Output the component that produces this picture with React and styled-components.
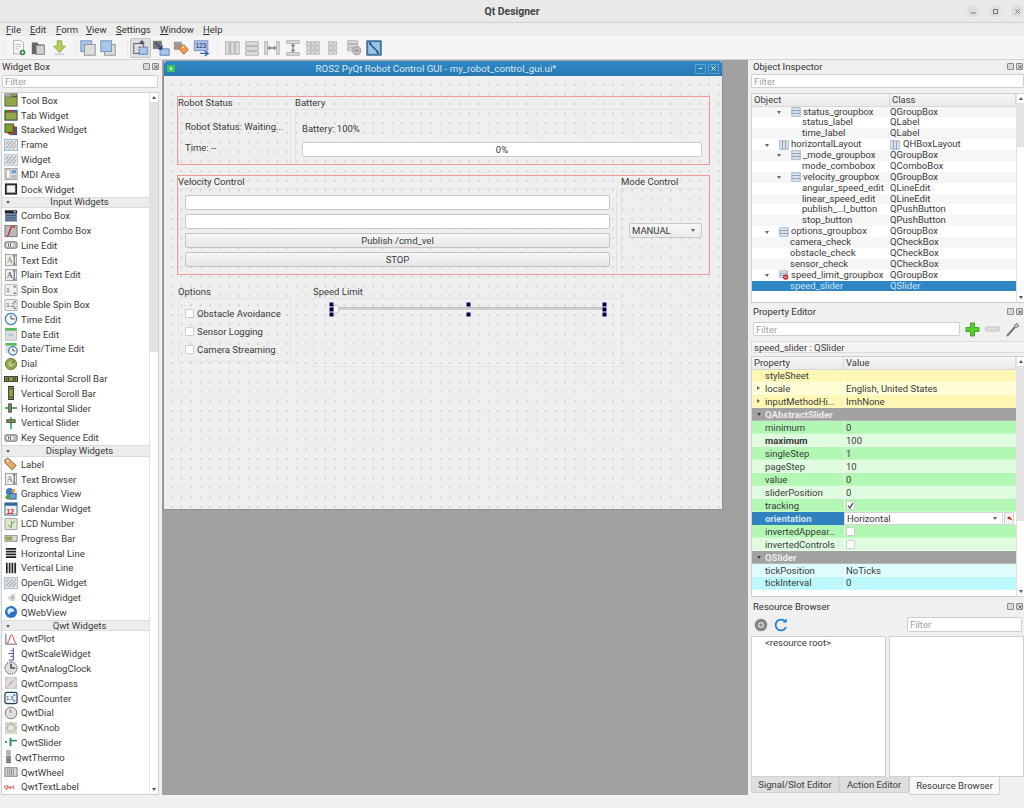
import React from "react";
import styled, { createGlobalStyle } from "styled-components";

const FONT = `Roboto, "Open Sans", "Liberation Sans", sans-serif`;
const TEXT_SIZE = "9.5px";

const GlobalStyle = createGlobalStyle`
  html, body {
    margin: 0;
    padding: 0;
    background: #f0f0f0;
  }
  * { box-sizing: border-box; }
`;

const Screen = styled.div`
  width: 1024px;
  height: 808px;
  display: flex;
  flex-direction: column;
  overflow: hidden;
  background: #f0f0f0;
  color: #3a3a3a;
  font-family: ${FONT};
  font-size: ${TEXT_SIZE};
`;

const TitleBar = styled.div`
  height: 23px;
  flex: none;
  display: flex;
  align-items: center;
  justify-content: flex-end;
  gap: 10px;
  padding-right: 1px;
  position: relative;
  background: #e9e9e9;
  border-bottom: 1px solid #cfcfcf;
`;

const AppTitle = styled.div`
  position: absolute;
  left: 0;
  right: 0;
  text-align: center;
  font-weight: 700;
  font-size: 10.4px;
  color: #444;
`;

const WinButton = styled.div`
  width: 12px;
  height: 12px;
  border-radius: 50%;
  background: #dedede;
  display: flex;
  align-items: center;
  justify-content: center;
`;

const MenuBar = styled.div`
  height: 13px;
  flex: none;
  display: flex;
  align-items: center;
  padding-left: 6px;
  background: #ececec;
`;

const MenuItem = styled.div`
  width: ${p => p.$w}px;
  color: #333;
`;

const ToolBar = styled.div`
  height: 24px;
  flex: none;
  display: flex;
  align-items: center;
  padding-left: 3px;
  background: #f5f5f5;
  border-bottom: 1px solid #d2d2d2;
`;

const Grip = styled.div`
  width: 3px;
  height: 12px;
  margin: 0 ${p => p.$after || 6}px 0 ${p => p.$before || 0}px;
  background-image: radial-gradient(circle, #c4c4c4 0.7px, transparent 0.9px);
  background-size: 3px 3px;
`;

const ToolBtn = styled.div`
  width: 20.3px;
  height: 20px;
  flex: none;
  display: flex;
  align-items: center;
  justify-content: center;
  border-radius: 2px;
  background: ${p => (p.$on ? "#dedede" : "transparent")};
  border: 1px solid ${p => (p.$on ? "#c6c6c6" : "transparent")};
`;

const Main = styled.div`
  flex: 1;
  min-height: 0;
  display: flex;
  padding-bottom: 13px;
`;

const Dock = styled.div`
  width: 160px;
  flex: none;
  display: flex;
  flex-direction: column;
`;

const DockHead = styled.div`
  height: 13px;
  flex: none;
  display: flex;
  align-items: center;
  justify-content: space-between;
  padding: 0 1px 0 2px;
  color: #333;
  white-space: nowrap;
`;

const DockBtns = styled.div`
  display: flex;
  gap: 2px;
`;

const DockBtn = styled.div`
  width: 7px;
  height: 7px;
  border: 1px solid #8a8a8a;
  border-radius: 1px;
  background: #d8d8d8;
  display: flex;
  align-items: center;
  justify-content: center;
`;

const FilterInput = styled.input`
  display: block;
  width: ${p => (p.$w ? `${p.$w}px` : "auto")};
  height: ${p => p.$h || 14}px;
  margin: ${p => p.$m || "0"};
  padding: 0 2px;
  border: 1px solid #cfcfcf;
  border-radius: 2px;
  background: #fff;
  font-family: ${FONT};
  font-size: ${TEXT_SIZE};
  outline: none;
  &::placeholder { color: #a0a0a0; opacity: 1; }
`;

const BoxList = styled.div`
  flex: 1;
  min-height: 0;
  margin: 4px 1px 0 1px;
  display: flex;
  background: #fff;
  border: 1px solid #d0d0d0;
  overflow: hidden;
`;

const ListCol = styled.div`
  flex: 1;
  min-width: 0;
`;

const Row = styled.div`
  height: 14.8px;
  display: flex;
  align-items: center;
  padding-left: ${p => (p.$narrow ? 3 : 2)}px;
  gap: 3px;
  color: #3a3a3a;
  white-space: nowrap;
`;

const Category = styled.div`
  height: 11.8px;
  position: relative;
  display: flex;
  align-items: center;
  justify-content: center;
  padding-left: 8px;
  background: #ececec;
  border-top: 1px solid #dcdcdc;
  border-bottom: 1px solid #dcdcdc;
  color: #3a3a3a;
  line-height: 10px;
`;

const SmallArrow = styled.span`
  position: absolute;
  left: ${p => p.$left ?? 4}px;
  top: 50%;
  margin-top: -1px;
  border-left: 2px solid transparent;
  border-right: 2px solid transparent;
  border-top: 3px solid ${p => p.$color || "#666"};
`;

const Scroll = styled.div`
  width: ${p => p.$w || 9}px;
  flex: none;
  display: flex;
  flex-direction: column;
  background: #fff;
  border-left: 1px solid #e2e2e2;
`;

const ScrollEnd = styled.div`
  height: 9px;
  flex: none;
  display: flex;
  align-items: center;
  justify-content: center;
`;

const Thumb = styled.div`
  height: ${p => p.$h}px;
  flex: none;
  background: #e3e3e3;
`;

const ScrollRest = styled.div`
  flex: 1;
  display: flex;
  flex-direction: column;
  justify-content: flex-end;
`;

const ArrowUp = styled.span`
  border-left: 2.5px solid transparent;
  border-right: 2.5px solid transparent;
  border-bottom: 3px solid #555;
`;

const ArrowDown = styled.span`
  border-left: 2.5px solid transparent;
  border-right: 2.5px solid transparent;
  border-top: 3px solid #555;
`;

const Mdi = styled.div`
  width: 586px;
  flex: none;
  margin: 0 2px;
  padding: 1px 0 0 1px;
  background: #a1a1a1;
`;

const FormWindow = styled.div`
  width: 560px;
  height: 449px;
  display: flex;
  flex-direction: column;
  border-left: 1px solid #8f8f8f;
  border-right: 1px solid #8f8f8f;
  border-bottom: 1px solid #8f8f8f;
  background: #efefef;
`;

const FormTitle = styled.div`
  height: 15px;
  flex: none;
  display: flex;
  align-items: center;
  padding: 0 3px;
  position: relative;
  background: linear-gradient(#3089c7, #2878b2);
  border-radius: 3px 3px 0 0;
  color: #d8e8f4;
  font-size: 9.7px;
`;

const FormTitleText = styled.div`
  position: absolute;
  left: 0;
  right: 14px;
  text-align: center;
`;

const FormBtns = styled.div`
  margin-left: auto;
  display: flex;
  gap: 2px;
  z-index: 1;
`;

const FormBtn = styled.div`
  width: 11px;
  height: 10px;
  border: 1px solid #5fa3d3;
  border-radius: 1px;
  display: flex;
  align-items: center;
  justify-content: center;
  color: #fff;
`;

const Canvas = styled.div`
  flex: 1;
  display: flex;
  flex-direction: column;
  padding: 20px 13px 0 13px;
  gap: 10px;
  background-color: #efefef;
  background-image: radial-gradient(circle, #b4b4b4 0.55px, transparent 0.8px);
  background-size: 9.6px 9.6px;
  background-position: 3px 4px;
`;

const RedLayout = styled.div`
  height: ${p => p.$h}px;
  width: 533px;
  flex: none;
  display: flex;
  gap: 4px;
  padding: 0 1px;
  position: relative;
  &::after {
    content: "";
    position: absolute;
    inset: 0;
    z-index: 2;
    border: 1px solid #f29a9a;
    pointer-events: none;
  }
`;

const PlainLayout = styled.div`
  display: flex;
  align-items: flex-start;
  gap: 22px;
  padding-left: 1px;
`;

const Group = styled.div`
  width: ${p => (p.$w ? `${p.$w}px` : "auto")};
  flex: ${p => (p.$w ? "none" : "1")};
  height: ${p => (p.$h ? `${p.$h}px` : "auto")};
  display: flex;
  flex-direction: column;
  white-space: nowrap;
`;

const GroupLabel = styled.div`
  height: 13px;
  padding-bottom: 1px;
  flex: none;
  display: flex;
  align-items: center;
  color: #3a3a3a;
`;

const GroupFrame = styled.div`
  flex: 1;
  min-height: 0;
  display: flex;
  flex-direction: column;
  gap: ${p => p.$gap ?? 4}px;
  padding: ${p => p.$pad || "7px"};
  justify-content: ${p => p.$justify || "flex-start"};
  position: relative;
  border: 1px solid #e2e2e2;
`;

const FieldLabel = styled.div`
  height: 14px;
  flex: none;
  display: flex;
  align-items: center;
  color: #3a3a3a;
  white-space: nowrap;
`;

const Progress = styled.div`
  height: 15px;
  flex: none;
  display: flex;
  align-items: center;
  justify-content: center;
  background: #fff;
  border: 1px solid #cdcdcd;
  border-radius: 2px;
`;

const FormInput = styled.input`
  display: block;
  width: 100%;
  height: 15px;
  flex: none;
  border: 1px solid #c6c6c6;
  border-radius: 2px;
  background: #fff;
  outline: none;
`;

const PushButton = styled.button`
  display: block;
  width: 100%;
  height: 15px;
  flex: none;
  padding: 0;
  border: 1px solid #c4c4c4;
  border-radius: 2px;
  background: linear-gradient(#f6f6f6, #e6e6e6);
  font-family: ${FONT};
  font-size: ${TEXT_SIZE};
  color: #3a3a3a;
`;

const Combo = styled.div`
  height: 15px;
  flex: none;
  display: flex;
  align-items: center;
  justify-content: space-between;
  padding: 0 6px 0 2px;
  background: linear-gradient(#f6f6f6, #ebebeb);
  border: 1px solid #c8c8c8;
  border-radius: 2px;
  position: relative;
  color: #3a3a3a;
`;

const InlineArrow = styled.span`
  border-left: 2.5px solid transparent;
  border-right: 2.5px solid transparent;
  border-top: 3px solid #666;
`;

const CheckRow = styled.div`
  height: 18px;
  flex: none;
  display: flex;
  align-items: center;
  gap: 3px;
  color: #3a3a3a;
  white-space: nowrap;
`;

const CheckBox = styled.span`
  width: 9px;
  height: 9px;
  flex: none;
  display: flex;
  align-items: center;
  justify-content: center;
  background: #fff;
  border: 1px solid #d0d0d0;
  border-radius: 1px;
`;

const SliderArea = styled.div`
  height: 13px;
  flex: none;
  margin: 0 17px;
  position: relative;
`;

const SliderTrack = styled.div`
  height: 3px;
  margin-top: 4px;
  background: #cfcfcf;
  border-top: 1px solid #bdbdbd;
`;

const SliderThumb = styled.div`
  position: absolute;
  left: 2px;
  top: 2px;
  width: 6px;
  height: 8px;
  background: #fff;
  border: 1px solid #c8c8c8;
  border-radius: 2px;
`;

const Handle = styled.div`
  position: absolute;
  width: 3px;
  height: 3px;
  background: #000;
  box-shadow: 0 0 0 0.5px #0000b0;
  left: ${p => p.$x}%;
  top: ${p => p.$y}px;
  margin-left: -1px;
`;

const RightDock = styled.div`
  width: 274px;
  flex: none;
  display: flex;
  flex-direction: column;
`;

const Section = styled.div`
  height: ${p => (p.$h ? `${p.$h}px` : "auto")};
  flex: ${p => (p.$h ? "none" : "1")};
  min-height: 0;
  display: flex;
  flex-direction: column;
  padding-left: 1px;
`;

const TreeBox = styled.div`
  height: 210px;
  flex: none;
  margin-top: 5px;
  display: flex;
  background: #fff;
  border: 1px solid #cfcfcf;
  border-right: 0;
`;

const TableBody = styled.div`
  flex: 1;
  min-width: 0;
  display: flex;
  flex-direction: column;
`;

const HeadRow = styled.div`
  height: 12.5px;
  flex: none;
  display: grid;
  grid-template-columns: ${p => p.$cols};
  background: linear-gradient(#f6f6f6, #eaeaea);
  border-bottom: 1px solid #d8d8d8;
  color: #3a3a3a;
`;

const HeadCell = styled.div`
  display: flex;
  align-items: center;
  padding-left: 2px;
  border-right: 1px solid #d8d8d8;
`;

const TreeRow = styled.div`
  height: 10.88px;
  flex: none;
  display: grid;
  grid-template-columns: 138px 1fr;
  background: ${p => (p.$sel ? "#2f86c5" : p.$alt ? "#f6f6f6" : "#fff")};
  color: ${p => (p.$sel ? "#cfe4f4" : "#3a3a3a")};
  white-space: nowrap;
  line-height: 10.88px;
`;

const TreeName = styled.div`
  display: flex;
  align-items: center;
  position: relative;
  padding-left: ${p => p.$indent}px;
  gap: 2px;
`;

const TreeClass = styled.div`
  display: flex;
  align-items: center;
  gap: 3px;
`;

const PropTop = styled.div`
  display: flex;
  align-items: center;
  padding: 4px 3px 0 2px;
  gap: 4px;
`;

const PropTool = styled.div`
  width: ${p => p.$w}px;
  height: 14px;
  flex: none;
  display: flex;
  align-items: center;
  justify-content: center;
`;

const ObjectName = styled.div`
  height: 12px;
  flex: none;
  margin-top: 5px;
  padding-left: 2px;
  display: flex;
  align-items: center;
  background: #f5f5f5;
  border: 1px solid #dcdcdc;
  border-right: 0;
`;

const PropBox = styled.div`
  height: 241px;
  flex: none;
  margin-top: 3px;
  display: flex;
  background: #fff;
  border: 1px solid #cfcfcf;
  border-right: 0;
`;

const PropRow = styled.div`
  height: 12.98px;
  flex: none;
  display: grid;
  grid-template-columns: 92px 1fr;
  background: ${p => p.$bg};
  color: ${p => p.$fg || "#3a3a3a"};
  white-space: nowrap;
  border-bottom: 1px solid rgba(255, 255, 255, 0.25);
`;

const PropName = styled.div`
  display: flex;
  align-items: center;
  position: relative;
  padding-left: 13px;
  overflow: hidden;
  background: ${p => p.$bg || "transparent"};
  color: ${p => p.$fg || "inherit"};
  font-weight: ${p => (p.$bold ? 700 : 400)};
`;

const PropValue = styled.div`
  display: flex;
  align-items: center;
  padding-left: 1px;
  border-left: 1px solid rgba(255, 255, 255, 0.6);
`;

const OrientCell = styled.div`
  display: flex;
  align-items: stretch;
  background: #fff;
  gap: 1px;
`;

const OrientCombo = styled.div`
  flex: 1;
  display: flex;
  align-items: center;
  justify-content: space-between;
  padding: 0 5px 0 2px;
  background: #fdfdfd;
  border: 1px solid #d4d4d4;
`;

const ResetBtn = styled.div`
  width: 10px;
  flex: none;
  margin-right: 2px;
  background: #f2f2f2;
  border: 1px solid #d4d4d4;
  display: flex;
  align-items: center;
  justify-content: center;
`;

const ResToolbar = styled.div`
  height: 19px;
  flex: none;
  margin-top: 2px;
  display: flex;
  align-items: center;
  gap: 6px;
  padding: 0 2px 0 3px;
`;

const ResPanes = styled.div`
  flex: 1;
  min-height: 0;
  margin-top: 2px;
  display: flex;
  gap: 3px;
`;

const ResPane = styled.div`
  flex: 1;
  background: #fff;
  border: 1px solid #d0d0d0;
  padding: 0 0 0 13px;
  line-height: 12px;
  color: #3a3a3a;
`;

const Tabs = styled.div`
  height: 18px;
  flex: none;
  display: flex;
  align-items: flex-start;
`;

const Tab = styled.div`
  width: ${p => p.$w}px;
  height: ${p => (p.$on ? 18 : 16)}px;
  flex: none;
  display: flex;
  align-items: center;
  justify-content: center;
  background: ${p => (p.$on ? "#f8f8f8" : "#dedede")};
  border: 1px solid #d0d0d0;
  border-top: 0;
  border-radius: 0 0 2px 2px;
  color: #3a3a3a;
  white-space: nowrap;
`;

const ArrowRight = styled.span`
  position: absolute;
  left: 5px;
  top: 50%;
  margin-top: -2px;
  border-top: 2px solid transparent;
  border-bottom: 2px solid transparent;
  border-left: 3px solid #666;
`;

/* ---- icons ---- */

const Hatch = ({ b = "#8fb4e0" }) => (
  <>
    <rect x=".5" y="1.5" width="14" height="12" fill="#e4e4e4" stroke={b} />
    <path d="M2 11l7-8M5 12l8-9M9 12l4-5M2 7l3-4" stroke="#aaa" strokeWidth="1.2" />
  </>
);
const Edit = () => (
  <>
    <rect x="1" y="4" width="13" height="7" rx="1.5" fill="#bbb" stroke="#777" />
    <rect x="3" y="6" width="7" height="3" fill="#fff" />
    <path d="M5 6v3M7 6v3" stroke="#444" />
  </>
);
const Sheet = ({ c = "#5a8a4a" }) => (
  <>
    <rect x="1.5" y="1.5" width="12" height="12" fill="#eee" stroke="#999" />
    <text x="3" y="11" fontSize="9" fontFamily="Liberation Serif" fill={c}>A</text>
    <path d="M11 3v9M9.5 3h3M9.5 12h3" stroke="#555" />
  </>
);
const Spin = ({ t }) => (
  <>
    <rect x="1" y="1.5" width="13" height="12" rx="1" fill="#eee" stroke="#aaa" />
    <text x="2.5" y="10" fontSize="6.5" fontFamily="Liberation Sans" fill="#555">{t}</text>
    <path d="M10 4.5l1.5-1.5L13 4.5zM10 10.5l1.5 1.5 1.5-1.5z" fill="#333" />
  </>
);
const Clock = ({ x = 7.5, y = 7.5, r = 6 }) => (
  <>
    <circle cx={x} cy={y} r={r} fill="#f4f4f4" stroke="#3b7fc4" strokeWidth="1.3" />
    <path d={`M${x} ${y - r + 2}V${y}h${r - 2}`} stroke="#444" fill="none" />
  </>
);

const icons = {
  toolbox: (
    <>
      <rect x="1" y="1" width="13" height="13" fill="#8fa84a" stroke="#555" />
      <path d="M1 4h13M8 1v3" stroke="#444" />
      <rect x="1" y="1" width="7" height="3" fill="#aaa" />
    </>
  ),
  tab: (
    <>
      <rect x="1" y="3" width="13" height="10" fill="#8fa84a" stroke="#333" />
      <rect x="1" y="2" width="5" height="3" fill="#3a7a3a" />
      <rect x="6" y="2" width="4" height="3" fill="#c33" />
      <rect x="10" y="2" width="4" height="3" fill="#36a" />
    </>
  ),
  stacked: (
    <>
      <rect x="6" y="4" width="8" height="9" fill="#2c55a5" />
      <rect x="4" y="3" width="8" height="9" fill="#c2401c" />
      <rect x="1" y="1" width="9" height="9" fill="#7f9e2a" stroke="#444" />
    </>
  ),
  frame: <Hatch />,
  widget: <Hatch b="#b4c8e4" />,
  mdi: (
    <>
      <rect x="1" y="1.5" width="13" height="12" fill="#e8e8e8" stroke="#999" />
      <rect x="8" y="3" width="5" height="4" fill="#6a9fd0" />
      <rect x="2.5" y="3" width="4" height="9" fill="#fff" stroke="#aaa" />
      <rect x="8" y="8.5" width="5" height="4" fill="#bbb" />
    </>
  ),
  dock: (
    <>
      <rect x="1" y="1.5" width="13" height="12" fill="#222" />
      <rect x="3" y="3.5" width="9" height="8" fill="#f2f2f2" stroke="#88a" strokeDasharray="1 1" />
    </>
  ),
  combo: (
    <>
      <rect x="1" y="1.5" width="13" height="12" fill="#6f8caf" />
      <rect x="1" y="1.5" width="13" height="3" fill="#222" />
      <path d="M10 2.5h3l-1.5 1.5z" fill="#fff" />
      <path d="M2 7h11M2 9.5h11M2 12h11" stroke="#456" />
    </>
  ),
  fontcombo: (
    <>
      <rect x="1" y="1.5" width="13" height="12" fill="#bbb" stroke="#777" />
      <path d="M3 13c3 0 3-9 5-10h4" stroke="#b22" strokeWidth="1.4" fill="none" />
    </>
  ),
  lineedit: <Edit />,
  textedit: <Sheet />,
  plaintext: <Sheet c="#333" />,
  spin: <Spin t="1" />,
  dspin: <Spin t="1.2" />,
  time: <Clock />,
  date: (
    <>
      <rect x="1.5" y="2" width="12" height="12" fill="#e0e0e0" stroke="#bbb" />
      <rect x="1.5" y="1" width="12" height="3" fill="#5cb85c" />
      <rect x="5" y="7" width="5" height="3" fill="#b4c8e0" />
    </>
  ),
  datetime: (
    <>
      <rect x="1.5" y="1" width="12" height="3" fill="#5cb85c" />
      <rect x="1.5" y="4" width="9" height="8" fill="#e0e0e0" />
      <Clock x={9.5} y={9.5} r={4.5} />
    </>
  ),
  dial: (
    <>
      <circle cx="7.5" cy="7.5" r="6" fill="#8fa84a" stroke="#6a7c32" />
      <circle cx="7.5" cy="7.5" r="3" fill="#b8c97a" />
      <path d="M8 7l3-3" stroke="#333" />
    </>
  ),
  hscroll: (
    <>
      <rect x=".5" y="5" width="14" height="5" fill="#8fa84a" stroke="#222" />
      <path d="M3 6v3M5 6v3M10 6v3M12 6v3" stroke="#222" />
    </>
  ),
  vscroll: (
    <>
      <rect x="5" y=".5" width="5" height="14" fill="#8fa84a" stroke="#222" />
      <path d="M6 3h3M6 12h3" stroke="#222" />
    </>
  ),
  hslider: (
    <>
      <path d="M1 7.5h13" stroke="#4a7" strokeWidth="2" />
      <rect x="5" y="3" width="3" height="9" fill="#7c8e3a" stroke="#555" />
    </>
  ),
  vslider: (
    <>
      <path d="M7.5 1v13" stroke="#4a7" strokeWidth="2" />
      <rect x="3" y="4" width="9" height="3" fill="#7c8e3a" stroke="#555" />
    </>
  ),
  label: (
    <>
      <path d="M1 3l3-2 9 8-4 5-8-8z" fill="#e8a860" stroke="#665" />
      <circle cx="4" cy="4" r="1" fill="#fff" />
    </>
  ),
  graphics: (
    <>
      <circle cx="6" cy="5" r="4" fill="#3b7fc4" />
      <rect x="6" y="7" width="7" height="6" fill="#6a9fd0" stroke="#469" />
      <circle cx="10" cy="4" r="2" fill="#e0a030" />
      <circle cx="4" cy="11" r="2.5" fill="#5a9a4a" />
    </>
  ),
  calendar: (
    <>
      <rect x="1" y="1" width="13" height="13" fill="#eee" stroke="#36669a" />
      <rect x="1" y="1" width="13" height="3" fill="#36669a" />
      <text x="2.6" y="12.4" fontSize="7.5" fontWeight="700" fontFamily="Liberation Sans" fill="#c22">12</text>
    </>
  ),
  lcd: (
    <>
      <rect x="1" y="1.5" width="13" height="12" rx="1" fill="#dfe6d4" stroke="#999" />
      <path d="M8 4v7M8 11c-3 0-3-2-4-3M8 7c2 0 3-1 3-3" stroke="#6a9a4a" fill="none" />
    </>
  ),
  progress: (
    <>
      <rect x="1" y="5" width="13" height="6" fill="#ddd" stroke="#888" />
      <rect x="2" y="6" width="7" height="4" fill="#8fa84a" />
    </>
  ),
  hline: <path d="M2 3h11M2 6h11M2 9h11M2 12h11" stroke="#222" strokeWidth="1.8" />,
  vline: <path d="M3 2v11M6 2v11M9 2v11M12 2v11" stroke="#222" strokeWidth="1.8" />,
  opengl: <Hatch b="#a8bcd8" />,
  quick: (
    <>
      <path d="M3 8l9-5v9H7z" fill="#ddd" />
      <path d="M7 8h5M9 5v6" stroke="#aaa" />
    </>
  ),
  web: (
    <>
      <circle cx="7.5" cy="7.5" r="6.5" fill="#2a6fc9" />
      <path d="M4 5c2-2 6-2 7 1 0 2-3 1-4 2s-1 3-2 2-2-3-1-5z" fill="#dcebf8" />
    </>
  ),
  qwtplot: (
    <>
      <path d="M2 2v11h12" stroke="#555" fill="none" />
      <path d="M3 12c3 0 3-9 5-9s3 9 5 9" stroke="#d33" fill="none" />
    </>
  ),
  qwtscale: <path d="M10 1v13H5M10 4H7M10 7H5M10 10H7" stroke="#44a" fill="none" />,
  qwtclock: (
    <>
      <circle cx="7.5" cy="7.5" r="6.5" fill="#ddd" stroke="#333" strokeDasharray="1.5 1" />
      <path d="M7.5 3v4.5H12" stroke="#111" strokeWidth="1.2" fill="none" />
    </>
  ),
  compass: (
    <>
      <rect x="1" y="1" width="13" height="13" fill="#ccc" />
      <circle cx="7.5" cy="7.5" r="5.5" fill="#ddd" />
      <path d="M5 10l5-5" stroke="#d66" />
    </>
  ),
  counter: (
    <>
      <rect x="1" y="1.5" width="13" height="12" rx="2" fill="#eef" stroke="#245" strokeWidth="1.3" />
      <text x="2.4" y="9.8" fontSize="5.5" fontFamily="Liberation Sans" fill="#247">1.3</text>
      <path d="M11 3l1.5 2h-3zM11 12l1.5-2h-3z" fill="#37a" />
    </>
  ),
  qwtdial: (
    <>
      <circle cx="7.5" cy="7.5" r="6.3" fill="#ddd" stroke="#777" />
      <path d="M7.5 7.5L6.5 4" stroke="#c44" />
    </>
  ),
  knob: (
    <>
      <rect x="1" y="1" width="13" height="13" fill="#d8d8cc" />
      <circle cx="7.5" cy="7.5" r="4" fill="#e4e4d8" stroke="#aa9" />
      <path d="M7.5 1v2M1 7.5h2M12 7.5h2M3 3l1 1M12 3l-1 1" stroke="#aa9" />
    </>
  ),
  qwtslider: (
    <>
      <path d="M1 7.5h3" stroke="#285" strokeWidth="2" strokeDasharray="2 1" />
      <path d="M7 3v9" stroke="#285" strokeWidth="2" />
      <path d="M7 6h7" stroke="#285" strokeWidth="1.5" />
    </>
  ),
  thermo: (
    <>
      <rect x="1" y="0" width="5" height="7" fill="#aaa" />
      <rect x="1" y="7" width="5" height="7" fill="#667" />
      <path d="M1 2h5M1 5h5M1 9h5M1 12h5" stroke="#ddd" strokeWidth=".6" />
    </>
  ),
  wheel: (
    <>
      <rect x="1" y="3" width="13" height="9" fill="#ddd" stroke="#777" />
      <path d="M4 4v7M6 4v7M8 4v7M10 4v7" stroke="#888" />
    </>
  ),
  qwtlabel: <text x="0" y="10" fontSize="6.5" fontStyle="italic" fontWeight="700" fontFamily="Liberation Serif" fill="#e33">Qwt</text>,
  vlay: (
    <>
      <rect x="1" y="1" width="10" height="10" fill="#dfe7f0" stroke="#7f97b4" strokeWidth=".8" />
      <path d="M1 4.3h10M1 7.7h10" stroke="#7f97b4" strokeWidth="1.1" />
    </>
  ),
  hlay: (
    <>
      <rect x="1" y="1" width="10" height="10" fill="#dfe7f0" stroke="#7f97b4" strokeWidth=".8" />
      <path d="M4.3 1v10M7.7 1v10" stroke="#7f97b4" strokeWidth="1.1" />
    </>
  ),
  brokenlay: (
    <>
      <rect x="1" y="1" width="9" height="8" fill="#dfe7f0" stroke="#7f97b4" strokeWidth=".8" />
      <path d="M1 4h9M1 6.5h9" stroke="#7f97b4" />
      <circle cx="8" cy="8.5" r="3.2" fill="#c8232c" />
      <path d="M6 8.5h4" stroke="#fff" />
    </>
  ),
};

const tb = {
  newf: (
    <>
      <path d="M4 1.5h8l3 3v12H4z" fill="#fafafa" stroke="#aaa" />
      <path d="M6 6h6M6 8.5h6M6 11h4" stroke="#bbb" />
      <circle cx="14" cy="15" r="3" fill="#2e8b3a" />
      <path d="M12.5 15h3M14 13.5v3" stroke="#fff" />
    </>
  ),
  open: (
    <>
      <path d="M2 4h6l2 2h6v11H2z" fill="#666" />
      <rect x="7" y="7" width="9" height="10" fill="#cfcfcf" stroke="#888" />
    </>
  ),
  save: (
    <>
      <path d="M7 2h5v6h4l-6.5 7L3 8h4z" fill="#b4cf5c" stroke="#8aa63a" />
      <rect x="4" y="16" width="11" height="2" fill="#d0d0d0" />
    </>
  ),
  back: (
    <>
      <rect x="2" y="2" width="12" height="12" fill="#a9c5ea" stroke="#6f90c0" />
      <rect x="6" y="6" width="12" height="12" fill="#dcdcdc" stroke="#8c8c8c" />
    </>
  ),
  front: (
    <>
      <rect x="6" y="6" width="12" height="12" fill="#dcdcdc" stroke="#8c8c8c" />
      <rect x="2" y="2" width="12" height="12" fill="#a9c5ea" stroke="#6f90c0" />
    </>
  ),
  edit: (
    <>
      <rect x="2" y="5" width="11" height="11" fill="#dcdcdc" stroke="#555" />
      <rect x="8" y="9" width="9" height="8" fill="#a9c5ea" stroke="#3a5a96" strokeDasharray="2 1" />
      <path d="M11 1v5M8.5 3.5h5" stroke="#223" />
    </>
  ),
  signals: (
    <>
      <rect x="1" y="2" width="10" height="9" fill="#777" />
      <rect x="9" y="11" width="10" height="7" fill="#a9c5ea" stroke="#5a7ab0" />
      <path d="M4 4l7 7M11 7v4H7" stroke="#1c3c80" strokeWidth="1.3" fill="none" />
    </>
  ),
  buddy: (
    <>
      <rect x="2" y="3" width="9" height="9" fill="#999" />
      <path d="M7 10l6-4 5 6-5 5z" fill="#ec9a55" stroke="#b86c2c" />
      <circle cx="12.5" cy="9" r="1" fill="#fff" />
    </>
  ),
  order: (
    <>
      <rect x="1.5" y="2" width="15" height="11" fill="#a9c5ea" stroke="#6f90c0" />
      <text x="3" y="10" fontSize="7" fontFamily="Liberation Sans" fill="#225">123</text>
      <path d="M8 16h8M13 13l4 3-4 3" stroke="#2a5cb0" strokeWidth="1.4" fill="none" />
    </>
  ),
  lh: <path d="M3 3h4v14H3zM8.5 3h4v14h-4zM14 3h4v14h-4z" fill="#dedede" stroke="#aaa" />,
  lv: <path d="M3 3h14v4H3zM3 8.5h14v4H3zM3 14h14v4H3z" fill="#dedede" stroke="#aaa" />,
  sh: (
    <>
      <path d="M2 3h3v14H2zM15 3h3v14h-3z" fill="#dedede" stroke="#aaa" />
      <path d="M6 10h8M6 10l2-2M6 10l2 2M14 10l-2-2M14 10l-2 2" stroke="#444" fill="none" />
    </>
  ),
  sv: (
    <>
      <path d="M3 2h14v3H3zM3 15h14v3H3z" fill="#dedede" stroke="#aaa" />
      <path d="M10 6v8M10 6l-2 2M10 6l2 2M10 14l-2-2M10 14l2-2" stroke="#444" fill="none" />
    </>
  ),
  grid: <path d="M3 3h4v4H3zM8 3h4v4H8zM13 3h4v4h-4zM3 8h4v4H3zM8 8h4v4H8zM13 8h4v4h-4zM3 13h4v4H3zM8 13h4v4H8zM13 13h4v4h-4z" fill="#dedede" stroke="#b4b4b4" />,
  form: <path d="M5 3h4v4H5zM10 3h4v4h-4zM5 8h4v4H5zM10 8h4v4h-4zM5 13h4v4H5zM10 13h4v4h-4z" fill="#dedede" stroke="#b4b4b4" />,
  breakl: (
    <>
      <path d="M3 2h11v3H3zM3 6h11v3H3zM3 10h11v3H3z" fill="#dedede" stroke="#aaa" />
      <circle cx="13" cy="13" r="4.5" fill="#c0c0c0" stroke="#999" />
      <path d="M11 13h4" stroke="#777" />
    </>
  ),
  adjust: (
    <>
      <rect x="2" y="2" width="16" height="16" fill="#3d78ad" stroke="#3a6a96" />
      <rect x="3.5" y="3.5" width="13" height="13" fill="#9cc4e2" />
      <path d="M5 5l10 10" stroke="#1c4468" strokeWidth="1.2" />
      <path d="M4 4h3v3zM16 16h-3v-3z" fill="#1c4468" />
    </>
  ),
};

const Glyph = ({ name, w = 14 }) => (
  <svg width={w} height="14" viewBox={`0 0 ${w === 14 ? 15 : 7} 15`} style={{ flex: "none" }}>
    {icons[name]}
  </svg>
);

const TreeGlyph = ({ name }) => (
  <svg width="10" height="10" viewBox="0 0 12 12" style={{ flex: "none" }}>
    {icons[name]}
  </svg>
);

const TbIcon = ({ name }) => (
  <svg width="18" height="18" viewBox="0 0 20 20">
    {tb[name]}
  </svg>
);

const CloseX = ({ color = "#666", size = 5 }) => (
  <svg width={size} height={size} viewBox="0 0 6 6">
    <path d="M0.5 0.5l5 5M5.5 0.5l-5 5" stroke={color} strokeWidth="1.2" />
  </svg>
);

const DockButtons = () => (
  <DockBtns>
    <DockBtn />
    <DockBtn>
      <CloseX size={4} color="#555" />
    </DockBtn>
  </DockBtns>
);

/* ---- data ---- */

const menu = [
  ["F", "ile", 24],
  ["E", "dit", 26],
  ["F", "orm", 30],
  ["V", "iew", 30],
  ["S", "ettings", 44],
  ["W", "indow", 43],
  ["H", "elp", 30],
];

const widgetBox = [
  { items: [["toolbox", "Tool Box"], ["tab", "Tab Widget"], ["stacked", "Stacked Widget"], ["frame", "Frame"], ["widget", "Widget"], ["mdi", "MDI Area"], ["dock", "Dock Widget"]] },
  {
    title: "Input Widgets",
    items: [["combo", "Combo Box"], ["fontcombo", "Font Combo Box"], ["lineedit", "Line Edit"], ["textedit", "Text Edit"], ["plaintext", "Plain Text Edit"], ["spin", "Spin Box"], ["dspin", "Double Spin Box"], ["time", "Time Edit"], ["date", "Date Edit"], ["datetime", "Date/Time Edit"], ["dial", "Dial"], ["hscroll", "Horizontal Scroll Bar"], ["vscroll", "Vertical Scroll Bar"], ["hslider", "Horizontal Slider"], ["vslider", "Vertical Slider"], ["lineedit", "Key Sequence Edit"]],
  },
  {
    title: "Display Widgets",
    items: [["label", "Label"], ["textedit", "Text Browser"], ["graphics", "Graphics View"], ["calendar", "Calendar Widget"], ["lcd", "LCD Number"], ["progress", "Progress Bar"], ["hline", "Horizontal Line"], ["vline", "Vertical Line"], ["opengl", "OpenGL Widget"], ["quick", "QQuickWidget"], ["web", "QWebView"]],
  },
  {
    title: "Qwt Widgets",
    items: [["qwtplot", "QwtPlot"], ["qwtscale", "QwtScaleWidget"], ["qwtclock", "QwtAnalogClock"], ["compass", "QwtCompass"], ["counter", "QwtCounter"], ["qwtdial", "QwtDial"], ["knob", "QwtKnob"], ["qwtslider", "QwtSlider"], ["thermo", "QwtThermo"], ["wheel", "QwtWheel"], ["qwtlabel", "QwtTextLabel"]],
  },
];

const tree = [
  { name: "status_groupbox", cls: "QGroupBox", indent: 39, arrow: 27, icon: "vlay" },
  { name: "status_label", cls: "QLabel", indent: 50 },
  { name: "time_label", cls: "QLabel", indent: 50 },
  { name: "horizontalLayout", cls: "QHBoxLayout", indent: 27, arrow: 15, icon: "hlay", clsIcon: "hlay" },
  { name: "_mode_groupbox", cls: "QGroupBox", indent: 39, arrow: 27, icon: "vlay" },
  { name: "mode_combobox", cls: "QComboBox", indent: 50 },
  { name: "velocity_groupbox", cls: "QGroupBox", indent: 39, arrow: 27, icon: "vlay" },
  { name: "angular_speed_edit", cls: "QLineEdit", indent: 50 },
  { name: "linear_speed_edit", cls: "QLineEdit", indent: 50 },
  { name: "publish_…l_button", cls: "QPushButton", indent: 50 },
  { name: "stop_button", cls: "QPushButton", indent: 50 },
  { name: "options_groupbox", cls: "QGroupBox", indent: 27, arrow: 15, icon: "vlay" },
  { name: "camera_check", cls: "QCheckBox", indent: 38 },
  { name: "obstacle_check", cls: "QCheckBox", indent: 38 },
  { name: "sensor_check", cls: "QCheckBox", indent: 38 },
  { name: "speed_limit_groupbox", cls: "QGroupBox", indent: 27, arrow: 15, icon: "brokenlay" },
  { name: "speed_slider", cls: "QSlider", indent: 38, sel: true },
];

const props = [
  { n: "styleSheet", v: "", bg: "#fff7b4" },
  { n: "locale", v: "English, United States", bg: "#fffdd6", arrow: true },
  { n: "inputMethodHi…", v: "ImhNone", bg: "#fff7b4", arrow: true },
  { n: "QAbstractSlider", head: true },
  { n: "minimum", v: "0", bg: "#b2f8b4" },
  { n: "maximum", v: "100", bg: "#e0fce0", bold: true },
  { n: "singleStep", v: "1", bg: "#b2f8b4" },
  { n: "pageStep", v: "10", bg: "#e0fce0" },
  { n: "value", v: "0", bg: "#b2f8b4" },
  { n: "sliderPosition", v: "0", bg: "#e0fce0" },
  { n: "tracking", bg: "#b2f8b4", check: true, on: true },
  { n: "orientation", orient: true },
  { n: "invertedAppear…", bg: "#b2f8b4", check: true },
  { n: "invertedControls", bg: "#e0fce0", check: true },
  { n: "QSlider", head: true },
  { n: "tickPosition", v: "NoTicks", bg: "#defcfc" },
  { n: "tickInterval", v: "0", bg: "#bdf8fc" },
];

const ToolGroupA = ["newf", "open", "save"];
const ToolGroupB = ["back", "front"];
const ToolGroupC = ["edit", "signals", "buddy", "order"];
const ToolGroupD = ["lh", "lv", "sh", "sv", "grid", "form", "breakl", "adjust"];

const handles = [[0, 0], [0, 5], [0, 10], [50, 0], [50, 10], [100, 0], [100, 5], [100, 10]];

const PropertyRow = ({ p }) => {
  if (p.head) {
    return (
      <PropRow $bg="#a2a2a2" $fg="#ececec">
        <PropName $bold>
          <SmallArrow $color="#444" $left={5} />
          {p.n}
        </PropName>
      </PropRow>
    );
  }
  if (p.orient) {
    return (
      <PropRow $bg="#fff">
        <PropName $bg="#2f82bf" $fg="#cfe4f4" $bold>
          {p.n}
        </PropName>
        <OrientCell>
          <OrientCombo>
            Horizontal
            <InlineArrow />
          </OrientCombo>
          <ResetBtn>
            <svg width="5" height="5" viewBox="0 0 5 5">
              <path d="M0 2l3-2v1.2l2 2-1 1-2-1.6v1z" fill="#c22" />
            </svg>
          </ResetBtn>
        </OrientCell>
      </PropRow>
    );
  }
  return (
    <PropRow $bg={p.bg}>
      <PropName $bold={p.bold}>
        {p.arrow && <ArrowRight />}
        {p.n}
      </PropName>
      <PropValue>
        {p.check ? (
          <CheckBox>
            {p.on && (
              <svg width="7" height="7" viewBox="0 0 7 7">
                <path d="M1 3.5l2 2.5 3-5" stroke="#333" strokeWidth="1.2" fill="none" />
              </svg>
            )}
          </CheckBox>
        ) : (
          p.v
        )}
      </PropValue>
    </PropRow>
  );
};

const App = () => (
  <Screen>
    <GlobalStyle />
    <TitleBar>
      <AppTitle>Qt Designer</AppTitle>
      <WinButton>
        <svg width="5" height="5" viewBox="0 0 5 5"><path d="M0 4h5" stroke="#777" /></svg>
      </WinButton>
      <WinButton>
        <svg width="5" height="5" viewBox="0 0 5 5"><rect x=".5" y=".5" width="4" height="4" fill="none" stroke="#777" /></svg>
      </WinButton>
      <WinButton>
        <CloseX color="#777" />
      </WinButton>
    </TitleBar>
    <MenuBar>
      {menu.map(([u, rest, w]) => (
        <MenuItem key={u + rest} $w={w}>
          <u>{u}</u>
          {rest}
        </MenuItem>
      ))}
    </MenuBar>
    <ToolBar>
      <Grip $after={3} />
      {ToolGroupA.map(n => (
        <ToolBtn key={n}><TbIcon name={n} /></ToolBtn>
      ))}
      <Grip $before={4} $after={1} />
      {ToolGroupB.map(n => (
        <ToolBtn key={n}><TbIcon name={n} /></ToolBtn>
      ))}
      <Grip $before={8} $after={1} />
      {ToolGroupC.map((n, i) => (
        <ToolBtn key={n} $on={i === 0}><TbIcon name={n} /></ToolBtn>
      ))}
      <Grip $before={4} $after={3} />
      {ToolGroupD.map(n => (
        <ToolBtn key={n}><TbIcon name={n} /></ToolBtn>
      ))}
    </ToolBar>

    <Main>
      <Dock>
        <DockHead>
          Widget Box
          <DockButtons />
        </DockHead>
        <FilterInput placeholder="Filter" readOnly $h={13} $m="2px 2px 0 2px" />
        <BoxList>
          <ListCol>
            {widgetBox.map((sec, s) => (
              <React.Fragment key={s}>
                {sec.title && (
                  <Category>
                    <SmallArrow />
                    {sec.title}
                  </Category>
                )}
                {sec.items.map(([icon, text]) => (
                  <Row key={text} $narrow={icon === "thermo"}>
                    <Glyph name={icon} w={icon === "thermo" ? 7 : 14} />
                    {text}
                  </Row>
                ))}
              </React.Fragment>
            ))}
          </ListCol>
          <Scroll>
            <ScrollEnd><ArrowUp /></ScrollEnd>
            <Thumb $h={250} />
            <ScrollRest>
              <ScrollEnd><ArrowDown /></ScrollEnd>
            </ScrollRest>
          </Scroll>
        </BoxList>
      </Dock>

      <Mdi>
        <FormWindow>
          <FormTitle>
            <svg width="8" height="7" viewBox="0 0 8 7">
              <rect width="8" height="7" rx="1" fill="#3fc65a" />
              <circle cx="4" cy="3.5" r="1.5" fill="#bff0c8" />
            </svg>
            <FormTitleText>ROS2 PyQt Robot Control GUI - my_robot_control_gui.ui*</FormTitleText>
            <FormBtns>
              <FormBtn>
                <svg width="3" height="3" viewBox="0 0 3 3"><path d="M0 1.5h3" stroke="#dcecf8" /></svg>
              </FormBtn>
              <FormBtn>
                <CloseX color="#fff" />
              </FormBtn>
            </FormBtns>
          </FormTitle>
          <Canvas>
            <RedLayout $h={69}>
              <Group $w={113}>
                <GroupLabel>Robot Status</GroupLabel>
                <GroupFrame $gap={7} $pad="9px 6px 0 6px">
                  <FieldLabel>Robot Status: Waiting...</FieldLabel>
                  <FieldLabel>Time: --</FieldLabel>
                </GroupFrame>
              </Group>
              <Group>
                <GroupLabel>Battery</GroupLabel>
                <GroupFrame $gap={7} $pad="11px 6px 0 6px">
                  <FieldLabel>Battery: 100%</FieldLabel>
                  <Progress>0%</Progress>
                </GroupFrame>
              </Group>
            </RedLayout>

            <RedLayout $h={100}>
              <Group $w={439}>
                <GroupLabel>Velocity Control</GroupLabel>
                <GroupFrame $pad="6px 6px 0 6px">
                  <FormInput readOnly />
                  <FormInput readOnly />
                  <PushButton>Publish /cmd_vel</PushButton>
                  <PushButton>STOP</PushButton>
                </GroupFrame>
              </Group>
              <Group>
                <GroupLabel>Mode Control</GroupLabel>
                <GroupFrame $justify="center" $pad="0 6px 2px 7px">
                  <Combo>
                    MANUAL
                    <InlineArrow />
                  </Combo>
                </GroupFrame>
              </Group>
            </RedLayout>

            <PlainLayout>
              <Group $w={113} $h={77}>
                <GroupLabel>Options</GroupLabel>
                <GroupFrame $gap={0} $pad="5px 6px">
                  <CheckRow><CheckBox />Obstacle Avoidance</CheckRow>
                  <CheckRow><CheckBox />Sensor Logging</CheckRow>
                  <CheckRow><CheckBox />Camera Streaming</CheckRow>
                </GroupFrame>
              </Group>
              <Group $w={309} $h={82}>
                <GroupLabel>Speed Limit</GroupLabel>
                <GroupFrame $pad="4px 0 0 0">
                  <SliderArea>
                    <SliderTrack />
                    <SliderThumb />
                    {handles.map(([x, y]) => (
                      <Handle key={`${x}-${y}`} $x={x} $y={y} />
                    ))}
                  </SliderArea>
                </GroupFrame>
              </Group>
            </PlainLayout>
          </Canvas>
        </FormWindow>
      </Mdi>

      <RightDock>
        <Section $h={245}>
          <DockHead>
            Object Inspector
            <DockButtons />
          </DockHead>
          <FilterInput placeholder="Filter" readOnly $h={14} $m="1px 0 0 0" />
          <TreeBox>
            <TableBody>
              <HeadRow $cols="138px 1fr">
                <HeadCell>Object</HeadCell>
                <HeadCell>Class</HeadCell>
              </HeadRow>
              {tree.map((t, i) => (
                <TreeRow key={t.name} $alt={i % 2 === 0} $sel={t.sel}>
                  <TreeName $indent={t.indent}>
                    {t.arrow && <SmallArrow $left={t.arrow - 2} />}
                    {t.icon && <TreeGlyph name={t.icon} />}
                    {t.name}
                  </TreeName>
                  <TreeClass>
                    {t.clsIcon && <TreeGlyph name={t.clsIcon} />}
                    {t.cls}
                  </TreeClass>
                </TreeRow>
              ))}
            </TableBody>
            <Scroll $w={8}>
              <ScrollEnd><ArrowUp /></ScrollEnd>
              <Thumb $h={44} />
              <ScrollRest>
                <ScrollEnd><ArrowDown /></ScrollEnd>
              </ScrollRest>
            </Scroll>
          </TreeBox>
        </Section>

        <Section $h={295}>
          <DockHead>
            Property Editor
            <DockButtons />
          </DockHead>
          <PropTop>
            <FilterInput placeholder="Filter" readOnly $w={207} $h={14} />
            <PropTool $w={16}>
              <svg width="15" height="15" viewBox="0 0 15 15">
                <path d="M5.5 1h4v4.5H14v4H9.5V14h-4V9.5H1v-4h4.5z" fill="#58d030" stroke="#3ea31e" />
              </svg>
            </PropTool>
            <PropTool $w={16}>
              <svg width="15" height="7" viewBox="0 0 15 7">
                <rect x=".5" y="1" width="14" height="4" rx="1" fill="#dcdcdc" stroke="#c4c4c4" />
              </svg>
            </PropTool>
            <PropTool $w={16}>
              <svg width="15" height="15" viewBox="0 0 15 15">
                <path d="M2 14L10 5" stroke="#777" strokeWidth="2" />
                <path d="M9 4l3-3 1 2 1 1-3 2z" fill="#bbb" stroke="#888" />
              </svg>
            </PropTool>
          </PropTop>
          <ObjectName>speed_slider : QSlider</ObjectName>
          <PropBox>
            <TableBody>
              <HeadRow $cols="92px 1fr">
                <HeadCell>Property</HeadCell>
                <HeadCell>Value</HeadCell>
              </HeadRow>
              {props.map(p => (
                <PropertyRow key={p.n} p={p} />
              ))}
            </TableBody>
            <Scroll $w={8}>
              <ScrollEnd><ArrowUp /></ScrollEnd>
              <Thumb $h={155} />
              <ScrollRest>
                <ScrollEnd><ArrowDown /></ScrollEnd>
              </ScrollRest>
            </Scroll>
          </PropBox>
        </Section>

        <Section>
          <DockHead>
            Resource Browser
            <DockButtons />
          </DockHead>
          <ResToolbar>
            <svg width="14" height="14" viewBox="0 0 14 14">
              <circle cx="7" cy="7" r="6.3" fill="#8a8a8a" />
              <circle cx="7" cy="7" r="4" fill="#cfcfcf" stroke="#6a6a6a" />
              <circle cx="7" cy="7" r="1.8" fill="#8a8a8a" />
            </svg>
            <svg width="14" height="14" viewBox="0 0 14 14">
              <path d="M11.5 4A5.4 5.4 0 1 0 12 9" stroke="#1f7fd6" strokeWidth="1.8" fill="none" />
              <path d="M8.5 4.5h4.3V.5z" fill="#1f7fd6" />
            </svg>
            <FilterInput placeholder="Filter" readOnly $w={115} $h={15} $m="0 0 0 auto" />
          </ResToolbar>
          <ResPanes>
            <ResPane>&lt;resource root&gt;</ResPane>
            <ResPane />
          </ResPanes>
          <Tabs>
            <Tab $w={88}>Signal/Slot Editor</Tab>
            <Tab $w={70}>Action Editor</Tab>
            <Tab $w={91} $on>Resource Browser</Tab>
          </Tabs>
        </Section>
      </RightDock>
    </Main>
  </Screen>
);

export default App;
